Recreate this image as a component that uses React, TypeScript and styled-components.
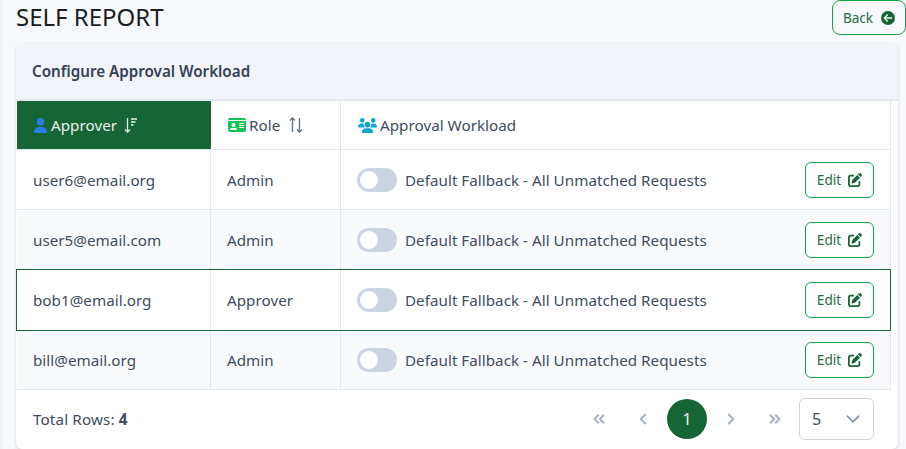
import React from "react";
import styled, { createGlobalStyle } from "styled-components";
import { FaUser, FaIdCard, FaUsers, FaCircleArrowLeft, FaPenToSquare } from "react-icons/fa6";
import { ChevronsLeft, ChevronLeft, ChevronRight, ChevronsRight, ChevronDown } from "lucide-react";

const Global = createGlobalStyle`
  html, body { margin: 0; padding: 0; height: 449px; overflow: hidden; background: #f8f9fc; }
  body { font-family: "Noto Sans", sans-serif; color: #3c4a60; }
`;
const Page = styled.div`
  width: 906px;
  height: 449px;
  box-sizing: border-box;
  border-left: 3px solid #f1f4f9;
  padding-left: 13px;
  display: flex;
  flex-direction: column;
  overflow: hidden;
`;
const TopBar = styled.div`
  height: 43px;
  display: flex;
  justify-content: space-between;
  align-items: flex-start;
`;
const Title = styled.h1`
  margin: 0;
  font-size: 24px;
  font-weight: 400;
  line-height: 33px;
  color: #1a1d21;
`;
const OutlineButton = styled.button<{ $w: number; $h: number }>`
  width: ${(p) => p.$w}px;
  height: ${(p) => p.$h}px;
  box-sizing: border-box;
  border: 1px solid #16a34a;
  border-radius: 6px;
  background: #fff;
  color: #256b43;
  font-family: inherit;
  font-size: 13.6px;
  padding: 0;
  display: flex;
  align-items: center;
  justify-content: center;
  gap: 7px;
  svg { color: #166534; }
`;
const BackButton = styled(OutlineButton)`
  background: transparent;
  border-radius: 8px;
  gap: 8px;
`;
const Card = styled.section`
  width: 882px;
  height: 406px;
  box-sizing: border-box;
  background: #fff;
  border-radius: 6px;
  box-shadow: 0 1px 3px rgba(100, 116, 139, 0.3);
  display: flex;
  flex-direction: column;
  padding-right: 7px;
`;
const CardHeader = styled.div`
  height: 58px;
  margin-right: -7px;
  box-sizing: border-box;
  padding-left: 16px;
  background: #f1f4f9;
  border-bottom: 2px solid #e2e8f0;
  display: flex;
  align-items: center;
  font-size: 15.2px;
  font-weight: 600;
  color: #344256;
  border-radius: 6px 6px 0 0;
`;
const Row = styled.div<{ $selected?: boolean; $alt?: boolean; $h: number }>`
  height: ${(p) => p.$h}px;
  box-sizing: border-box;
  display: grid;
  grid-template-columns: 194px 130px 1fr;
  border-bottom: 1px solid #e2e8f0;
  background: ${(p) => (p.$alt ? "#f8fafc" : "#fff")};
  ${(p) => p.$selected && "outline: 1px solid #166534; position: relative; z-index: 1; border-bottom-color: transparent;"}
`;
const Table = styled.div`
  margin-left: 1px;
  border-right: 1px solid #e2e8f0;
  font-size: 15.2px;
  letter-spacing: 0.03px;
  color: #3e4c61;
`;
const HeadCell = styled.div<{ $active?: boolean }>`
  display: flex;
  align-items: center;
  padding-left: ${(p) => (p.$active ? 16 : 17)}px;
  gap: 3px;
  background: ${(p) => (p.$active ? "#166534" : "transparent")};
  color: ${(p) => (p.$active ? "#e8f0ec" : "#3e4c61")};
  border-right: 1px solid ${(p) => (p.$active ? "#166534" : "#e2e8f0")};
  &:last-child { border-right: 0; }
`;
const SortGlyph = styled.svg<{ $left: number }>`
  margin-left: ${(p) => p.$left}px;
`;
const Cell = styled.div`
  display: flex;
  align-items: center;
  padding-left: 16px;
  border-right: 1px solid #e2e8f0;
`;
const WorkCell = styled.div`
  display: flex;
  align-items: center;
  padding: 0 16px 0 16px;
  gap: 8px;
`;
const Toggle = styled.span`
  width: 40px;
  height: 24px;
  border-radius: 12px;
  background: #cbd5e1;
  display: flex;
  align-items: center;
  padding-left: 3px;
  box-sizing: border-box;
  &::before {
    content: "";
    width: 18px;
    height: 18px;
    border-radius: 50%;
    background: #fff;
  }
`;
const WorkText = styled.span`
  flex: 1;
`;
const Footer = styled.div`
  display: flex;
  align-items: center;
  height: 58px;
  padding: 0 17px 0 17px;
  font-size: 15.2px;
  color: #3e4c61;
  b { font-weight: 700; }
`;
const Count = styled.span`
  flex: 1;
  letter-spacing: 0.15px;
`;
const Pager = styled.nav`
  display: flex;
  align-items: center;
`;
const PageArrow = styled.span`
  width: 44px;
  height: 40px;
  display: flex;
  align-items: center;
  justify-content: center;
  color: #a3afc2;
`;
const PageCurrent = styled.span`
  width: 40px;
  height: 40px;
  margin: 0 2px;
  border-radius: 50%;
  background: #166534;
  color: #e8f0ec;
  display: flex;
  align-items: center;
  justify-content: center;
  font-size: 16px;
`;
const PageSize = styled.div`
  margin-left: 2px;
  width: 75px;
  height: 42px;
  box-sizing: border-box;
  border: 1px solid #cbd5e1;
  border-radius: 6px;
  display: flex;
  align-items: center;
  justify-content: space-between;
  padding: 0 9px 0 12px;
  background: #fff;
  font-size: 16px;
  svg { color: #8c99ad; }
`;

const SortDown = () => (
  <SortGlyph $left={3} width="16" height="18" viewBox="0 0 16 18" fill="none" stroke="currentColor" strokeWidth="1.3">
    <path d="M4.5 2v14M2 13.5 4.5 16 7 13.5M8 3h6M8 6h4.5M8 9h2.5" />
  </SortGlyph>
);
const SortBoth = () => (
  <SortGlyph $left={5} width="16" height="18" viewBox="0 0 16 18" fill="none" stroke="#5f7086" strokeWidth="1.3">
    <path d="M4.5 16V2M2 4.5 4.5 2 7 4.5M11.5 2v14M9 13.5l2.5 2.5 2.5-2.5" />
  </SortGlyph>
);

const rows = [
  { email: "user6@email.org", role: "Admin" },
  { email: "user5@email.com", role: "Admin", alt: true },
  { email: "bob1@email.org", role: "Approver", selected: true },
  { email: "bill@email.org", role: "Admin", alt: true },
];

export default function App() {
  return (
    <Page>
      <Global />
      <TopBar>
        <Title>SELF REPORT</Title>
        <BackButton $w={74} $h={35}>
          Back <FaCircleArrowLeft size={14} />
        </BackButton>
      </TopBar>
      <Card>
        <CardHeader>Configure Approval Workload</CardHeader>
        <Table>
          <Row $h={49}>
            <HeadCell $active>
              <FaUser size={15} color="#2b7de9" /> Approver <SortDown />
            </HeadCell>
            <HeadCell>
              <FaIdCard size={18} color="#12c557" /> Role <SortBoth />
            </HeadCell>
            <HeadCell>
              <FaUsers size={19} color="#0ea5d6" /> Approval Workload
            </HeadCell>
          </Row>
          {rows.map((r) => (
            <Row key={r.email} $h={60} $alt={r.alt} $selected={r.selected}>
              <Cell>{r.email}</Cell>
              <Cell>{r.role}</Cell>
              <WorkCell>
                <Toggle />
                <WorkText>Default Fallback - All Unmatched Requests</WorkText>
                <OutlineButton $w={69} $h={36}>
                  Edit <FaPenToSquare size={14} />
                </OutlineButton>
              </WorkCell>
            </Row>
          ))}
        </Table>
        <Footer>
          <Count>
            Total Rows: <b>4</b>
          </Count>
          <Pager>
            <PageArrow><ChevronsLeft size={18} strokeWidth={2.4} /></PageArrow>
            <PageArrow><ChevronLeft size={18} strokeWidth={2.4} /></PageArrow>
            <PageCurrent>1</PageCurrent>
            <PageArrow><ChevronRight size={18} strokeWidth={2.4} /></PageArrow>
            <PageArrow><ChevronsRight size={18} strokeWidth={2.4} /></PageArrow>
            <PageSize>
              5 <ChevronDown size={22} />
            </PageSize>
          </Pager>
        </Footer>
      </Card>
    </Page>
  );
}
